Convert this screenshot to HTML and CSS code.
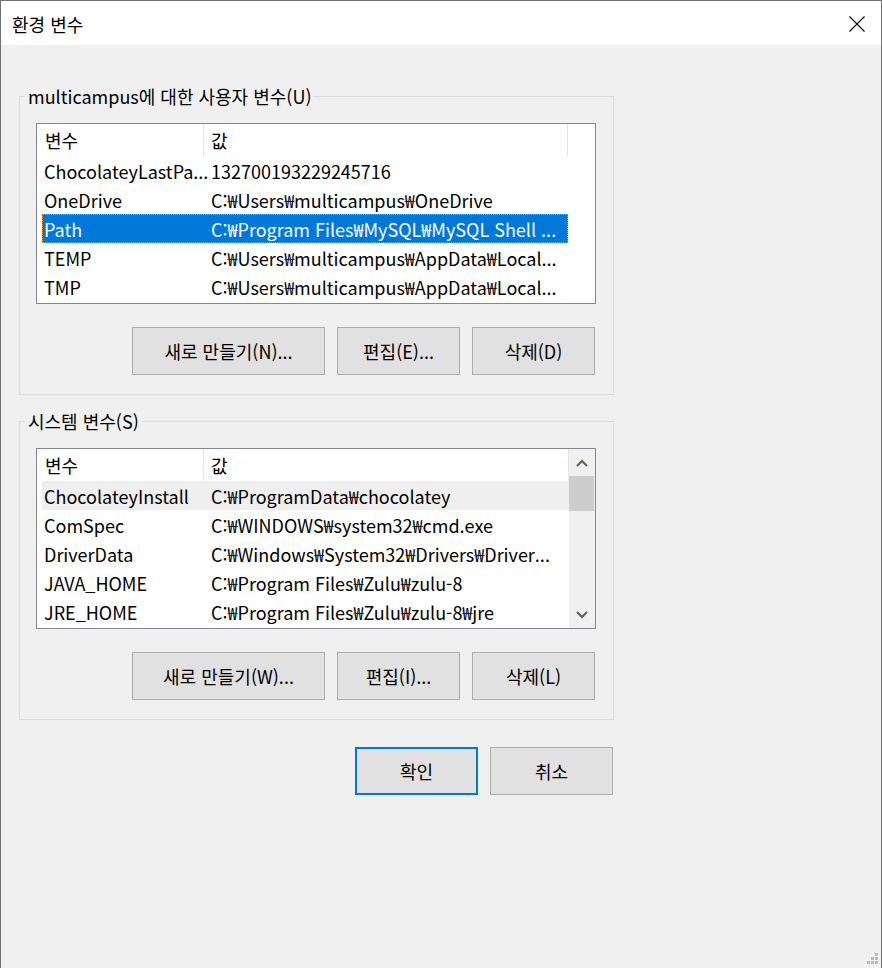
FILE: index.html
```html
<!DOCTYPE html>
<html lang="ko">
<head>
  <meta charset="UTF-8" />
  <title>환경 변수</title>
  <link rel="stylesheet" href="styles.css">
</head>
<body>
  <div class="window">
    <div class="titlebar">
      <span class="title">환경 변수</span>
      <svg class="close" width="16" height="16" viewBox="0 0 16 16">
        <path d="M0.5 0.5 L15.5 15.5 M15.5 0.5 L0.5 15.5" stroke="#000" stroke-width="1.1" fill="none" />
      </svg>
    </div>

    <div class="content">
      <fieldset class="group">
        <legend>multicampus에 대한 사용자 변수(U)</legend>
        <div class="list">
          <div class="list-main">
            <div class="list-head">
              <div class="col col-name">변수</div>
              <div class="col col-value">값</div>
              <div class="col col-rest"></div>
            </div>
            <div class="row"><div class="cell name">ChocolateyLastPa...</div><div class="cell value">132700193229245716</div></div>
            <div class="row"><div class="cell name">OneDrive</div><div class="cell value">C:₩Users₩multicampus₩OneDrive</div></div>
            <div class="row selected"><div class="cell name">Path</div><div class="cell value">C:₩Program Files₩MySQL₩MySQL Shell ...</div></div>
            <div class="row"><div class="cell name">TEMP</div><div class="cell value">C:₩Users₩multicampus₩AppData₩Local...</div></div>
            <div class="row"><div class="cell name">TMP</div><div class="cell value">C:₩Users₩multicampus₩AppData₩Local...</div></div>
          </div>
        </div>
        <div class="btn-row">
          <button class="btn btn-wide">새로 만들기(N)...</button>
          <button class="btn">편집(E)...</button>
          <button class="btn">삭제(D)</button>
        </div>
      </fieldset>

      <fieldset class="group second">
        <legend>시스템 변수(S)</legend>
        <div class="list">
          <div class="list-main">
            <div class="list-head">
              <div class="col col-name">변수</div>
              <div class="col col-value last">값</div>
            </div>
            <div class="row hover"><div class="cell name">ChocolateyInstall</div><div class="cell value">C:₩ProgramData₩chocolatey</div></div>
            <div class="row"><div class="cell name">ComSpec</div><div class="cell value">C:₩WINDOWS₩system32₩cmd.exe</div></div>
            <div class="row"><div class="cell name">DriverData</div><div class="cell value">C:₩Windows₩System32₩Drivers₩Driver...</div></div>
            <div class="row"><div class="cell name">JAVA_HOME</div><div class="cell value">C:₩Program Files₩Zulu₩zulu-8</div></div>
            <div class="row"><div class="cell name">JRE_HOME</div><div class="cell value">C:₩Program Files₩Zulu₩zulu-8₩jre</div></div>
          </div>
          <div class="scrollbar">
            <div class="arrow">
              <svg width="12" height="8" viewBox="0 0 12 8"><polyline points="1,7 6,2 11,7" stroke="#606060" stroke-width="2" fill="none" /></svg>
            </div>
            <div class="thumb"></div>
            <div class="track"></div>
            <div class="arrow">
              <svg width="12" height="8" viewBox="0 0 12 8"><polyline points="1,1 6,6 11,1" stroke="#606060" stroke-width="2" fill="none" /></svg>
            </div>
          </div>
        </div>
        <div class="btn-row">
          <button class="btn btn-wide">새로 만들기(W)...</button>
          <button class="btn">편집(I)...</button>
          <button class="btn">삭제(L)</button>
        </div>
      </fieldset>

      <div class="dialog-btns">
        <button class="btn default">확인</button>
        <button class="btn">취소</button>
      </div>
    </div>

    <svg class="grip" width="12" height="12" viewBox="0 0 12 12">
      <rect x="8" y="0" width="3" height="3" fill="#bcbcbc" />
      <rect x="4" y="4" width="3" height="3" fill="#bcbcbc" />
      <rect x="8" y="4" width="3" height="3" fill="#bcbcbc" />
      <rect x="0" y="8" width="3" height="3" fill="#bcbcbc" />
      <rect x="4" y="8" width="3" height="3" fill="#bcbcbc" />
      <rect x="8" y="8" width="3" height="3" fill="#bcbcbc" />
    </svg>
  </div>
</body>
</html>
```

FILE: styles.css
```css
* {
  box-sizing: border-box;
  margin: 0;
  padding: 0;
}
body {
  font-family: "Noto Sans CJK KR", "Noto Sans", sans-serif;
  font-size: 18px;
  color: #000;
  background-color: #f0f0f0;
  width: 882px;
  height: 968px;
  overflow: hidden;
}
.window {
  position: relative;
  width: 882px;
  height: 968px;
  border: 1px solid #707070;
  border-bottom: none;
  background-color: #f0f0f0;
}
.titlebar {
  height: 44px;
  background-color: #fff;
  display: flex;
  align-items: center;
  justify-content: space-between;
  padding: 0 16px 0 11px;
}
.title {
  font-size: 18px;
  line-height: 22px;
  margin-top: 1px;
}
.close {
  display: block;
  margin-top: 1px;
}
.content {
  padding-left: 18px;
  width: 613px;
}
.group {
  border: 1px solid #dcdcdc;
  margin-top: 40px;
  padding: 16px 17px 19px 16px;
  min-inline-size: 0;
}
.group.second {
  margin-top: 15px;
}
.group legend {
  margin-left: -11px;
  padding: 0 2px 0 3px;
  line-height: 22px;
  font-size: 18px;
}
.list {
  height: 181px;
  border: 1px solid #828790;
  background-color: #fff;
  display: flex;
  overflow: hidden;
}
.list-main {
  flex: 1;
  min-width: 0;
}
.list-head {
  display: flex;
  height: 32px;
}
.col {
  line-height: 33px;
  white-space: nowrap;
}
.col-name {
  width: 167px;
  padding-left: 8px;
  border-right: 1px solid #e5e5e5;
}
.col-value {
  width: 364px;
  padding-left: 7px;
  border-right: 1px solid #e5e5e5;
}
.col-value.last {
  width: auto;
  flex: 1;
}
.col-rest {
  flex: 1;
}
.row {
  display: flex;
  height: 29px;
  width: 526px;
  margin-left: 5px;
  border: 1px solid transparent;
  line-height: 28px;
  white-space: nowrap;
}
.row.selected {
  background-color: #0078d7;
  color: #fff;
  border: 1px dotted #ff8728;
}
.row.hover {
  background-color: #efefef;
  width: 527px;
}
.cell {
  overflow: hidden;
}
.cell.name {
  width: 168px;
  padding-left: 1px;
}
.cell.value {
  flex: 1;
}
.scrollbar {
  width: 26px;
  background-color: #f0f0f0;
  display: flex;
  flex-direction: column;
}
.arrow {
  height: 27px;
  display: flex;
  align-items: center;
  justify-content: center;
}
.arrow svg {
  display: block;
}
.thumb {
  height: 35px;
  margin: 0 1px 0 0;
  background-color: #cdcdcd;
}
.track {
  flex: 1;
}
.btn-row {
  display: flex;
  justify-content: flex-end;
  gap: 12px;
  margin-top: 23px;
  padding-right: 1px;
}
.btn {
  width: 123px;
  height: 48px;
  background-color: #e1e1e1;
  border: 1px solid #adadad;
  font-family: inherit;
  font-size: 18px;
  color: #000;
}
.btn-wide {
  width: 193px;
}
.dialog-btns {
  display: flex;
  justify-content: flex-end;
  gap: 12px;
  margin-top: 27px;
  padding-right: 1px;
}
.btn.default {
  border: 2px solid #0078d7;
}
.grip {
  position: absolute;
  right: 2px;
  bottom: 3px;
}
```
